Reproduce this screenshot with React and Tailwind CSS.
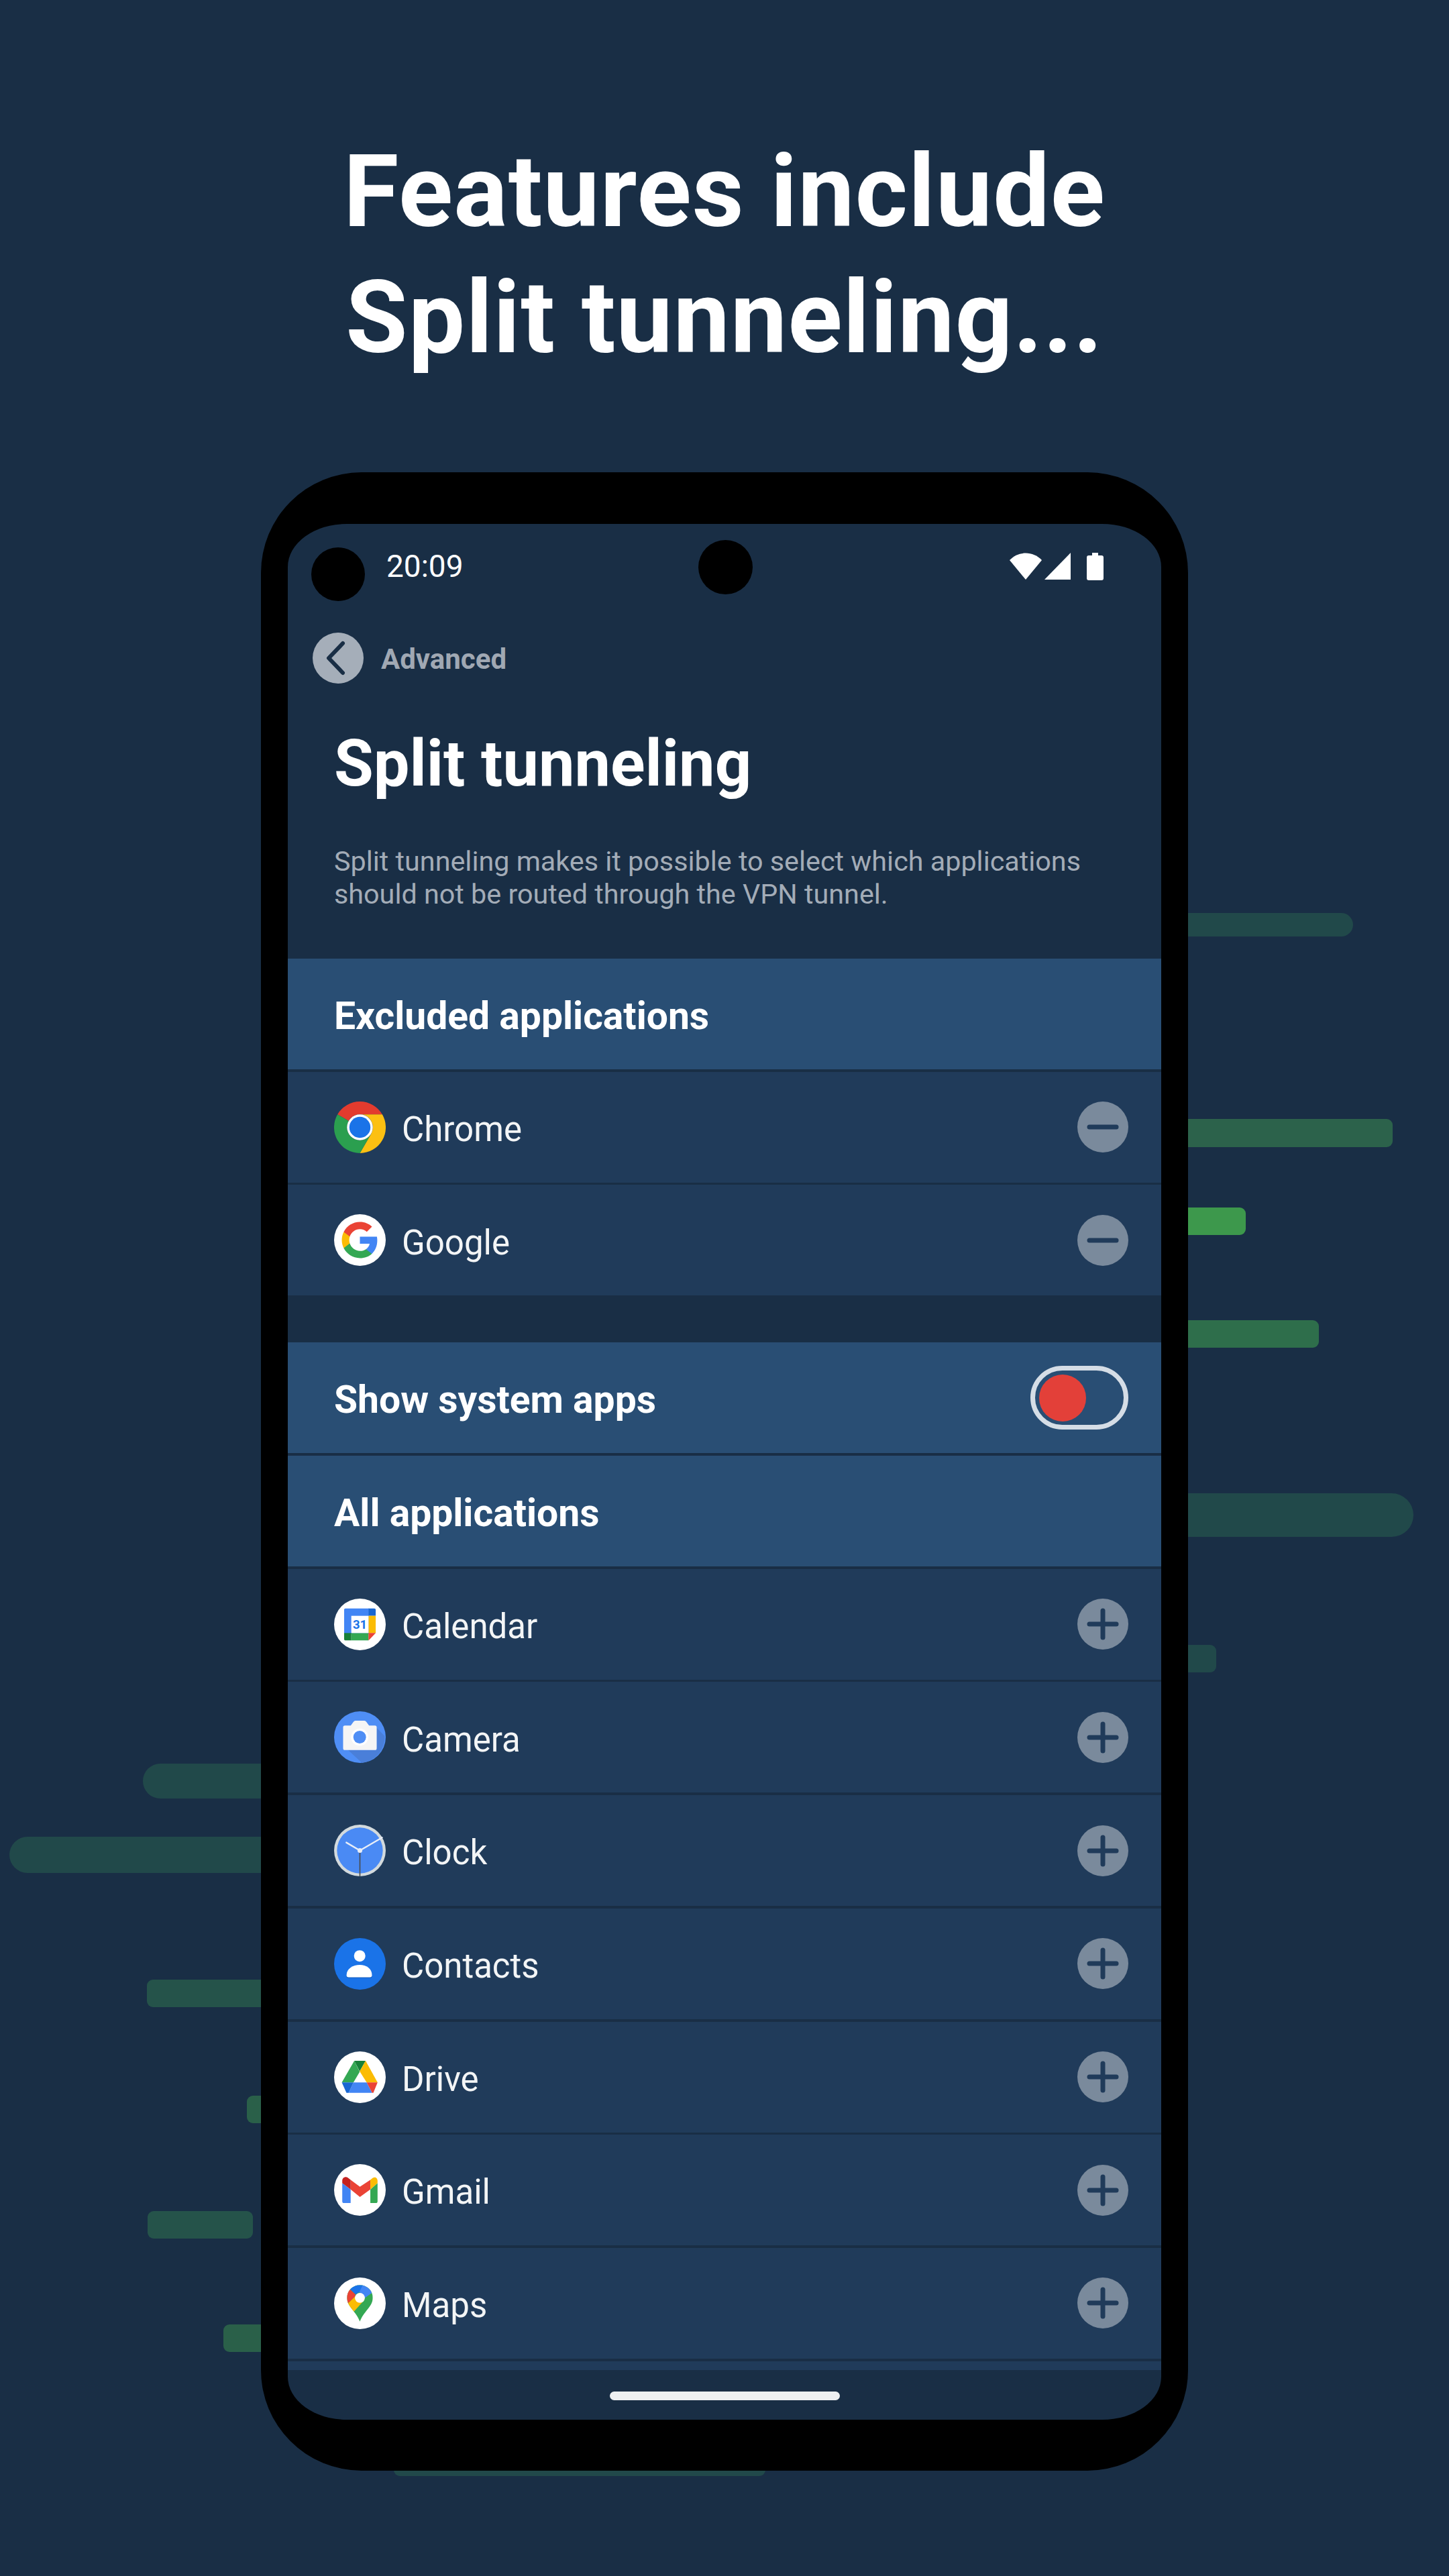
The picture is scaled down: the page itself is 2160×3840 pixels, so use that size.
const bars = [
  "left-[1700px] top-[1361px] w-[317px] h-[35px] rounded-full bg-[#21494a]",
  "left-[1700px] top-[1668px] w-[376px] h-[42px] rounded-[9px] bg-[#2c624b]",
  "left-[1700px] top-[1800px] w-[157px] h-[41px] rounded-[9px] bg-[#3d984c]",
  "left-[1700px] top-[1968px] w-[266px] h-[41px] rounded-[9px] bg-[#2e6e4b]",
  "left-[1700px] top-[2226px] w-[407px] h-[65px] rounded-full bg-[#21494a]",
  "left-[1700px] top-[2452px] w-[113px] h-[41px] rounded-[9px] bg-[#21494a]",
  "left-[213px] top-[2629px] w-[300px] h-[52px] rounded-full bg-[#21494a]",
  "left-[14px] top-[2738px] w-[500px] h-[54px] rounded-full bg-[#21494a]",
  "left-[219px] top-[2951px] w-[300px] h-[41px] rounded-[9px] bg-[#25534a]",
  "left-[368px] top-[3124px] w-[150px] h-[41px] rounded-[9px] bg-[#2a6049]",
  "left-[220px] top-[3296px] w-[157px] h-[41px] rounded-[9px] bg-[#25534a]",
  "left-[333px] top-[3465px] w-[150px] h-[41px] rounded-[9px] bg-[#2a6049]",
  "left-[587px] top-[3600px] w-[554px] h-[91px] rounded-[9px] bg-[#21494a]",
];

const Logo = ({ children }) => (
  <svg viewBox="0 0 48 48" className="w-[77px] h-[77px] shrink-0">
    {children}
  </svg>
);

const ChromeIcon = () => (
  <Logo>
    <path fill="#e33b2e" d="M24 0A24 24 0 0 1 44.8 12H24A12 12 0 0 0 13.6 18L3.2 12A24 24 0 0 1 24 0Z" />
    <path fill="#fcc012" d="M44.8 12A24 24 0 0 1 24 48L34.4 30A12 12 0 0 0 24 12Z" />
    <path fill="#2b9f4f" d="M3.2 12A24 24 0 0 0 24 48L34.4 30A12 12 0 0 1 13.6 18Z" />
    <circle cx="24" cy="24" r="12" fill="#fff" />
    <circle cx="24" cy="24" r="9.8" fill="#1a73e8" />
  </Logo>
);

const GoogleIcon = () => (
  <Logo>
    <circle cx="24" cy="24" r="24" fill="#fff" />
    <g transform="translate(5.66 5.66) scale(.764)">
      <path fill="#4285F4" d="M45.12 24.5c0-1.56-.14-3.06-.4-4.5H24v8.51h11.84c-.51 2.75-2.06 5.08-4.39 6.64v5.52h7.11c4.16-3.83 6.56-9.47 6.56-16.17z" />
      <path fill="#34A853" d="M24 46c5.94 0 10.92-1.97 14.56-5.33l-7.11-5.52c-1.97 1.32-4.49 2.1-7.45 2.1-5.73 0-10.58-3.87-12.31-9.07H4.34v5.7C7.96 41.07 15.4 46 24 46z" />
      <path fill="#FBBC05" d="M11.69 28.18C11.25 26.86 11 25.45 11 24s.25-2.86.69-4.18v-5.7H4.34C2.85 17.09 2 20.45 2 24c0 3.55.85 6.91 2.34 9.88l7.35-5.7z" />
      <path fill="#EA4335" d="M24 10.75c3.23 0 6.13 1.11 8.41 3.29l6.31-6.31C34.91 4.18 29.93 2 24 2 15.4 2 7.96 6.93 4.34 14.12l7.35 5.7c1.73-5.2 6.58-9.07 12.31-9.07z" />
    </g>
  </Logo>
);

const CalendarIcon = () => (
  <Logo>
    <circle cx="24" cy="24" r="24" fill="#fff" />
    <clipPath id="cal-clip">
      <rect x="9.3" y="9" width="29.4" height="30" rx="1.6" />
    </clipPath>
    <g clipPath="url(#cal-clip)">
      <rect x="9.3" y="9" width="23" height="24" fill="#4285f4" />
      <rect x="32" y="9" width="7" height="7" fill="#1967d2" />
      <rect x="32" y="16" width="7" height="16" fill="#fbbc04" />
      <rect x="16" y="32" width="16" height="7" fill="#34a853" />
      <rect x="9.3" y="32" width="6.7" height="7" fill="#188038" />
      <polygon points="32,39 38.7,32 32,32" fill="#ea4335" />
    </g>
    <rect x="16" y="16" width="16" height="16" fill="#fff" />
    <text x="24" y="28" textAnchor="middle" fontSize="11.5" fontWeight="700" fontFamily="Roboto, sans-serif" fill="#1a73e8">
      31
    </text>
  </Logo>
);

const CameraIcon = () => (
  <Logo>
    <circle cx="24" cy="24" r="24" fill="#4f8ef5" />
    <path fill="#4a7fd9" d="M38 13.5L47 23A24 24 0 0 1 26 48L13 36H39.6V15Z" />
    <path fill="#f5f5f5" d="M10 13.3h5.5l2.4-3.4a3 3 0 0 1 2-1.2h8.2a3 3 0 0 1 2 1.2l2.4 3.4H38a1.6 1.6 0 0 1 1.6 1.6V34.4A1.6 1.6 0 0 1 38 36H10a1.6 1.6 0 0 1-1.6-1.6V14.9A1.6 1.6 0 0 1 10 13.3Z" />
    <circle cx="23.8" cy="24" r="8" fill="#fff" />
    <circle cx="23.8" cy="24" r="5.9" fill="#4f8ef5" />
  </Logo>
);

const ClockIcon = () => (
  <Logo>
    <circle cx="24" cy="24" r="24" fill="#d3dadd" />
    <circle cx="24" cy="24" r="21.3" fill="#4a8af4" />
    <line x1="24" y1="24" x2="11.4" y2="16.6" stroke="#e8eef8" strokeWidth="1.5" strokeLinecap="round" />
    <line x1="24" y1="24" x2="44.6" y2="12" stroke="#e8eef8" strokeWidth="1.5" strokeLinecap="round" />
    <line x1="24" y1="24" x2="24" y2="48" stroke="#4a4a4a" strokeWidth="1" />
    <circle cx="24" cy="24" r="2.2" fill="#e8eef8" />
  </Logo>
);

const ContactsIcon = () => (
  <Logo>
    <circle cx="24" cy="24" r="24" fill="#1a73e8" />
    <path fill="#1558b0" opacity=".6" d="M11.6 35.3c0-6 6-9.5 12.2-9.5s11.4 3.5 11.4 9.5a2 2 0 0 1-2 2H13.6a2 2 0 0 1-2-2Z" />
    <circle cx="23.8" cy="16.6" r="5.3" fill="#fff" />
    <path fill="#fff" d="M11.6 34.5c0-6 6-9.5 12.2-9.5s11.4 3.5 11.4 9.5a2 2 0 0 1-2 2H13.6a2 2 0 0 1-2-2Z" />
  </Logo>
);

const DriveIcon = () => (
  <Logo>
    <circle cx="24" cy="24" r="24" fill="#fff" />
    <polygon points="18.8,8.8 23.8,19 18,28.8 7.2,28.8" fill="#34a853" />
    <polygon points="18.8,8.8 29.3,8.8 23.8,18.5" fill="#188038" />
    <polygon points="29.3,8.8 40.4,28.8 30.3,28.8 23.8,18.5" fill="#fbbc04" />
    <polygon points="18,28.8 30.3,28.8 35.4,38.5 13.5,38.5" fill="#4285f4" />
    <polygon points="7.2,28.8 18,28.8 13.5,38.5 11.5,38.5" fill="#1967d2" />
    <polygon points="30.3,28.8 40.4,28.8 36.5,38.5 35.4,38.5" fill="#ea4335" />
  </Logo>
);

const GmailIcon = () => (
  <Logo>
    <circle cx="24" cy="24" r="24" fill="#fff" />
    <path fill="#4285f4" d="M7.6 17.6L15.4 23.6V36.2H9.2A1.6 1.6 0 0 1 7.6 34.6Z" />
    <path fill="#34a853" d="M33.7 23.6L40.4 17.6V34.6A1.6 1.6 0 0 1 38.8 36.2H33.7Z" />
    <polygon points="15.4,14.7 24,21 33.7,14.7 33.7,23.6 24,30.5 15.4,23.6" fill="#ea4335" />
    <path fill="#c5221f" d="M7.6 15.5C7.6 12.5 10.8 11 13 12.8L15.4 14.7V23.6L7.6 17.6Z" />
    <path fill="#fbbc04" d="M33.7 14.7L35.8 13C38 11.2 40.4 12.8 40.4 15.5V17.6L33.7 23.6Z" />
  </Logo>
);

const MapsIcon = () => (
  <Logo>
    <circle cx="24" cy="24" r="24" fill="#fff" />
    <clipPath id="maps-clip">
      <path d="M24 7A12 12 0 0 0 12 19C12 27 21 32 24 41C27 32 36 27 36 19A12 12 0 0 0 24 7Z" />
    </clipPath>
    <g clipPath="url(#maps-clip)">
      <rect x="10" y="5" width="28" height="38" fill="#34a853" />
      <polygon points="23,13 27.6,5 40,8 36,13.7 28.6,19" fill="#4285f4" />
      <polygon points="13,9 19.8,15.8 23.4,13.7 27.6,5 18,4" fill="#1a73e8" />
      <polygon points="8,15 15,11.2 19.8,15.8 19.8,17.5 12.8,24.2 8,24" fill="#ea4335" />
      <polygon points="12.5,24.5 19.8,17.5 28,21 18.5,31.6 14,28" fill="#fbbc04" />
    </g>
    <circle cx="24" cy="19" r="4.6" fill="#fff" />
  </Logo>
);

const ActionIcon = ({ plus }) => (
  <svg viewBox="0 0 76 76" className="w-[76px] h-[76px] shrink-0">
    <circle cx="38" cy="38" r="38" fill="#7a8a9c" />
    <line x1="18" y1="38" x2="58" y2="38" stroke="#203b5a" strokeWidth="7" strokeLinecap="round" />
    {plus && <line x1="38" y1="18" x2="38" y2="58" stroke="#203b5a" strokeWidth="7" strokeLinecap="round" />}
  </svg>
);

const AppRow = ({ icon, name, plus }) => (
  <div className="flex items-center h-[165px] pl-[69px] pr-[49px] bg-[#203b5a]">
    {icon}
    <span className="ml-[24px] pt-[8px] flex-1 text-[51px] text-white/95">{name}</span>
    <ActionIcon plus={plus} />
  </div>
);

const HeaderRow = ({ children }) => (
  <div className="flex items-center justify-between h-[165px] pl-[69px] pr-[49px] bg-[#294e74]">{children}</div>
);

const HeaderLabel = ({ children }) => <span className="pt-[6px] text-[57px] font-bold text-white">{children}</span>;

const apps = [
  { name: "Calendar", icon: <CalendarIcon /> },
  { name: "Camera", icon: <CameraIcon /> },
  { name: "Clock", icon: <ClockIcon /> },
  { name: "Contacts", icon: <ContactsIcon /> },
  { name: "Drive", icon: <DriveIcon /> },
  { name: "Gmail", icon: <GmailIcon /> },
  { name: "Maps", icon: <MapsIcon /> },
];

const StatusBar = () => (
  <div className="relative flex items-center justify-between h-[126px] pl-[147px] pr-[86px]">
    <div className="absolute left-[35px] top-[35px] w-[80px] h-[80px] rounded-full bg-black" />
    <div className="absolute left-[612px] top-[24px] w-[81px] h-[81px] rounded-full bg-black" />
    <span className="text-[46px] text-white">20:09</span>
    <div className="flex items-center gap-[4px]">
      <svg viewBox="0 0 48 40" className="w-[48px] h-[40px]">
        <path fill="#fff" d="M0 11C13-3 35-3 48 11L24 40Z" />
      </svg>
      <svg viewBox="0 0 39 40" className="w-[39px] h-[40px]">
        <polygon fill="#fff" points="39,0 39,40 0,40" />
      </svg>
      <svg viewBox="0 0 25 41" className="ml-[20px] w-[25px] h-[41px]">
        <path fill="#fff" d="M8 0h9v4h5a3 3 0 0 1 3 3v31a3 3 0 0 1-3 3H3a3 3 0 0 1-3-3V7a3 3 0 0 1 3-3h5Z" />
      </svg>
    </div>
  </div>
);

export default function App() {
  return (
    <div className="relative w-[2160px] h-[3840px] overflow-hidden bg-[#192e45] font-['Roboto',sans-serif]">
      {bars.map((bar) => (
        <div key={bar} className={`absolute ${bar}`} />
      ))}

      <div className="relative pt-[192px]">
        <h1 className="text-center text-[150px] leading-[188px] font-bold tracking-[1.2px] text-white">
          Features include
          <br />
          Split tunneling...
        </h1>

        <div className="mt-[136px] mx-auto w-[1382px] h-[2979px] pt-[77px] px-[40px] rounded-[150px] bg-black">
          <div className="flex flex-col h-[2826px] overflow-hidden rounded-[88px/64px] bg-[#192e45]">
            <div className="h-[648px] shrink-0">
              <StatusBar />
              <div className="flex items-center mt-[36px] h-[76px] pl-[37px]">
                <svg viewBox="0 0 76 76" className="w-[76px] h-[76px]">
                  <circle cx="38" cy="38" r="38" fill="#a5aeb9" />
                  <path d="M45 16L24 38L45 60" fill="none" stroke="#192e45" strokeWidth="6" strokeLinecap="round" strokeLinejoin="round" />
                </svg>
                <span className="ml-[26px] pt-[2px] text-[42px] font-bold text-[#a0a8b3]">Advanced</span>
              </div>
              <h2 className="mt-[63px] pl-[69px] text-[95.5px] leading-[112px] font-bold text-white">Split tunneling</h2>
              <p className="mt-[66px] pl-[69px] text-[41.3px] leading-[49px] text-[#a3acb7]">
                Split tunneling makes it possible to select which applications
                <br />
                should not be routed through the VPN tunnel.
              </p>
            </div>

            <div className="flex flex-col gap-[3.7px]">
              <HeaderRow>
                <HeaderLabel>Excluded applications</HeaderLabel>
              </HeaderRow>
              <AppRow name="Chrome" icon={<ChromeIcon />} />
              <AppRow name="Google" icon={<GoogleIcon />} />
            </div>

            <div className="flex flex-col gap-[3.7px] mt-[70px]">
              <HeaderRow>
                <HeaderLabel>Show system apps</HeaderLabel>
                <div className="flex items-center w-[146px] h-[95px] pl-[6px] rounded-full border-[7px] border-[#d5dde6]">
                  <div className="w-[70px] h-[70px] rounded-full bg-[#e34039]" />
                </div>
              </HeaderRow>
              <HeaderRow>
                <HeaderLabel>All applications</HeaderLabel>
              </HeaderRow>
              {apps.map((app) => (
                <AppRow key={app.name} name={app.name} icon={app.icon} plus />
              ))}
              <div className="h-[13px] bg-[#203b5a]" />
            </div>

            <div className="flex flex-1 justify-center pt-[32px]">
              <div className="w-[343px] h-[13px] rounded-full bg-[#eef0f2]" />
            </div>
          </div>
        </div>
      </div>
    </div>
  );
}
